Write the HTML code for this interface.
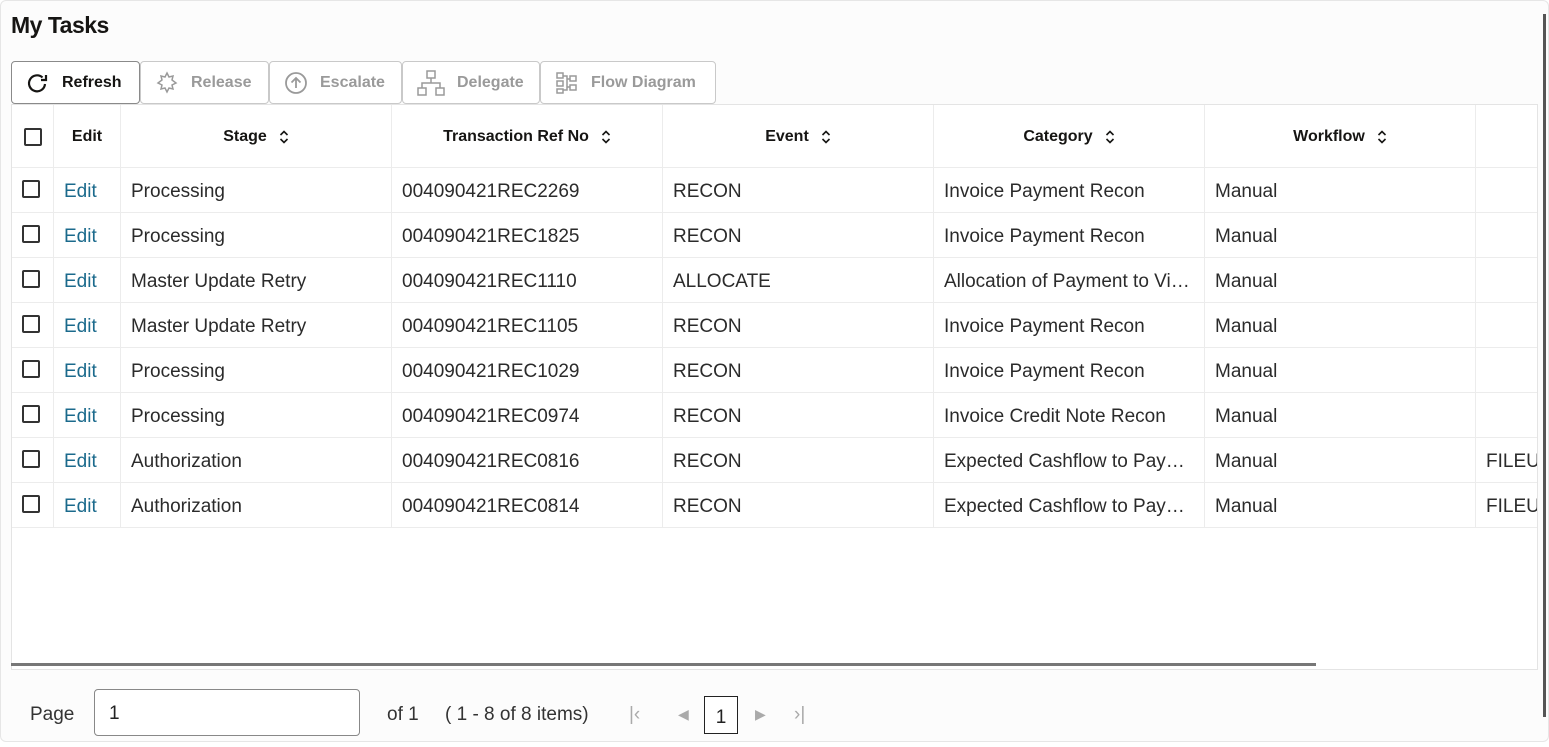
<!DOCTYPE html>
<html><head><style>
*{margin:0;padding:0;box-sizing:border-box}
body{width:1549px;height:747px;background:#fff;font-family:"Liberation Sans",sans-serif;color:#222;position:relative;overflow:hidden}
.frame{position:absolute;left:0;top:0;width:1549px;height:742px;border:1px solid #e6e6e6;border-radius:6px;background:#fcfcfc}
h1{position:absolute;left:11px;top:12px;font-size:23px;font-weight:bold;color:#161513;letter-spacing:-0.5px}
.tb{position:absolute;top:61px;height:43px;border:1px solid #c9c9c9;border-radius:4px;background:#fff;display:flex;align-items:center;font-size:16px;font-weight:bold;color:#9a9a9a}
.tb svg{margin:0 12px 0 14px}
.tb.on{border-color:#8a8a8a;color:#161513}
.grid{position:absolute;left:11px;top:104px;width:1527px;height:566px;border:1px solid #e4e4e4;background:#fff;overflow:hidden}
.row{position:absolute;left:0;height:45px;width:1527px;border-bottom:1px solid #ececec}
.c{position:absolute;top:0;height:100%;border-right:1px solid #ececec;display:flex;align-items:center;padding-left:10px;padding-top:3px;font-size:19px;color:#2b2b2b;white-space:nowrap;overflow:hidden}
.hd .c{justify-content:center;padding-left:0;padding-top:2px;font-size:16px;font-weight:bold;color:#161513}
.cb{width:18px;height:18px;border:2px solid #333;border-radius:2px}
.e{color:#1b6a8c}
.hd .c svg{margin-left:12px}
</style></head><body>
<div class="frame"></div>
<h1>My Tasks</h1>
<div class="tb on" style="left:11px;width:129px"><svg width="24" height="24" viewBox="0 0 24 24" fill="none" stroke="#161513" stroke-width="2.2"><path d="M19 13a8 8 0 1 1-2.5-6.5"/><path d="M20 4v5h-5" fill="none"/></svg>Refresh</div>
<div class="tb" style="left:140px;width:129px"><svg width="24" height="24" viewBox="0 0 24 24" fill="none" stroke="#9a9a9a" stroke-width="1.5"><path d="M12 2l2 4 4-1-1 4 4 3-4 2 1 4-4-1-2 4-2-4-4 1 1-4-4-2 4-3-1-4 4 1z"/></svg>Release</div>
<div class="tb" style="left:269px;width:133px"><svg width="24" height="24" viewBox="0 0 24 24" fill="none" stroke="#9a9a9a" stroke-width="1.8"><circle cx="12" cy="12" r="10"/><path d="M12 17V7M7.5 11.5L12 7l4.5 4.5"/></svg>Escalate</div>
<div class="tb" style="left:402px;width:138px"><svg width="28" height="26" viewBox="0 0 28 26" fill="none" stroke="#9a9a9a" stroke-width="1.5"><rect x="10" y="1" width="8" height="7"/><rect x="1" y="18" width="8" height="7"/><rect x="19" y="18" width="8" height="7"/><path d="M14 8v5M5 18v-5h18v5"/></svg>Delegate</div>
<div class="tb" style="left:540px;width:176px"><svg width="24" height="24" viewBox="0 0 24 24" fill="none" stroke="#9a9a9a" stroke-width="1.5"><rect x="2" y="2" width="6" height="5"/><rect x="2" y="10" width="6" height="5"/><rect x="2" y="18" width="6" height="4"/><rect x="15" y="5" width="6" height="5"/><rect x="15" y="14" width="6" height="5"/><path d="M8 5h4v14H8M12 8h3M12 16h3"/></svg>Flow Diagram</div>

<div class="grid">
<div class="row hd" style="top:0;height:63px">
<div class="c" style="left:0;width:42px"><div class="cb"></div></div>
<div class="c" style="left:42px;width:67px">Edit</div>
<div class="c" style="left:109px;width:271px">Stage<svg width="10" height="14" viewBox="0 0 10 14" fill="none" stroke="#161513" stroke-width="1.6"><path d="M1.5 5L5 1.5 8.5 5M1.5 9L5 12.5 8.5 9"/></svg></div>
<div class="c" style="left:380px;width:271px">Transaction Ref No<svg width="10" height="14" viewBox="0 0 10 14" fill="none" stroke="#161513" stroke-width="1.6"><path d="M1.5 5L5 1.5 8.5 5M1.5 9L5 12.5 8.5 9"/></svg></div>
<div class="c" style="left:651px;width:271px">Event<svg width="10" height="14" viewBox="0 0 10 14" fill="none" stroke="#161513" stroke-width="1.6"><path d="M1.5 5L5 1.5 8.5 5M1.5 9L5 12.5 8.5 9"/></svg></div>
<div class="c" style="left:922px;width:271px">Category<svg width="10" height="14" viewBox="0 0 10 14" fill="none" stroke="#161513" stroke-width="1.6"><path d="M1.5 5L5 1.5 8.5 5M1.5 9L5 12.5 8.5 9"/></svg></div>
<div class="c" style="left:1193px;width:271px">Workflow<svg width="10" height="14" viewBox="0 0 10 14" fill="none" stroke="#161513" stroke-width="1.6"><path d="M1.5 5L5 1.5 8.5 5M1.5 9L5 12.5 8.5 9"/></svg></div>
<div class="c" style="left:1464px;width:63px;border-right:none"></div>
</div>
</div>
<script>
var d=[["Processing","004090421REC2269","RECON","Invoice Payment Recon",""],
["Processing","004090421REC1825","RECON","Invoice Payment Recon",""],
["Master Update Retry","004090421REC1110","ALLOCATE","Allocation of Payment to Vi…",""],
["Master Update Retry","004090421REC1105","RECON","Invoice Payment Recon",""],
["Processing","004090421REC1029","RECON","Invoice Payment Recon",""],
["Processing","004090421REC0974","RECON","Invoice Credit Note Recon",""],
["Authorization","004090421REC0816","RECON","Expected Cashflow to Pay…","FILEUI"],
["Authorization","004090421REC0814","RECON","Expected Cashflow to Pay…","FILEUI"]];
var g=document.querySelector('.grid'),h='';
d.forEach(function(r,i){h+='<div class="row" style="top:'+(63+i*45)+'px"><div class="c" style="left:0;width:42px;justify-content:center;padding:0 3px 2px 0"><div class="cb"></div></div><div class="c e" style="left:42px;width:67px">Edit</div><div class="c" style="left:109px;width:271px">'+r[0]+'</div><div class="c" style="left:380px;width:271px">'+r[1]+'</div><div class="c" style="left:651px;width:271px">'+r[2]+'</div><div class="c" style="left:922px;width:271px">'+r[3]+'</div><div class="c" style="left:1193px;width:271px">Manual</div><div class="c" style="left:1464px;width:63px;border-right:none">'+r[4]+'</div></div>';});
g.insertAdjacentHTML('beforeend',h);
</script>
<div style="position:absolute;left:11px;top:663px;width:1305px;height:3px;background:#777"></div>
<div style="position:absolute;left:1543px;top:14px;width:3px;height:703px;background:#555"></div>
<div style="position:absolute;left:30px;top:704px;font-size:19px;color:#333">Page</div>
<div style="position:absolute;left:94px;top:689px;width:266px;height:47px;border:1px solid #888;border-radius:4px;background:#fff;font-size:19px;padding:13px 0 0 14px;color:#222">1</div>
<div style="position:absolute;left:387px;top:704px;font-size:19px;color:#333">of 1</div>
<div style="position:absolute;left:445px;top:704px;font-size:19px;color:#333">( 1 - 8 of 8 items)</div>
<div style="position:absolute;left:629px;top:704px;font-size:19px;color:#aaa">|&lsaquo;</div>
<div style="position:absolute;left:678px;top:706px;font-size:14px;color:#aaa">&#9664;</div>
<div style="position:absolute;left:704px;top:696px;width:34px;height:38px;border:1px solid #222;font-size:19px;text-align:center;padding-top:10px;background:#fff">1</div>
<div style="position:absolute;left:755px;top:706px;font-size:14px;color:#aaa">&#9654;</div>
<div style="position:absolute;left:794px;top:704px;font-size:19px;color:#aaa">&rsaquo;|</div>
</body></html>
